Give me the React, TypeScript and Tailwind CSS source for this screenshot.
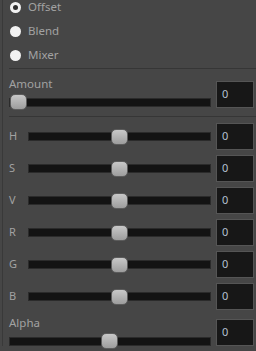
import React from 'react';

const font = { fontFamily: '"Noto Sans", "Liberation Sans", sans-serif' };

const Radio = ({ label, checked }: { label: string; checked?: boolean }) => (
  <div className="h-[24px] flex items-center">
    <div className="ml-[1px] w-[11px] h-[11px] rounded-full bg-[#f2f2f2] flex items-center justify-center">
      {checked && <div className="w-[5px] h-[5px] rounded-full bg-[#2e2e2e]" />}
    </div>
    <span className="ml-[7px] text-[11.5px] text-[#a2a2a2]">{label}</span>
  </div>
);

const Track = ({ start }: { start?: boolean }) => (
  <div className="relative flex-1 h-[16px] flex items-center">
    <div className="w-full h-[9px] bg-[#131313] border border-[#2b2b2b]" />
    <div
      className={
        'absolute top-0 w-[17px] h-[16px] rounded-[5px] border border-[#5c5c5c] bg-gradient-to-b from-[#c8c8c8] to-[#9d9d9d] ' +
        (start ? 'left-[1px]' : 'left-[calc(50%-9px)]')
      }
    />
  </div>
);

const ValueBox = ({ className = '' }: { className?: string }) => (
  <div className={'w-[38px] h-[27px] shrink-0 bg-[#171717] border border-[#555555] flex items-center pl-[5px] text-[11px] text-[#b4c2d2] ' + className}>
    0
  </div>
);

const Row = ({ label }: { label: string }) => (
  <div className="h-[27px] flex items-center">
    <span className="w-[19px] text-[11px] text-[#a2a2a2]">{label}</span>
    <Track />
    <ValueBox className="ml-[5px]" />
  </div>
);

const LabeledSlider = ({ label, start, boxTop }: { label: string; start?: boolean; boxTop: string }) => (
  <div className="flex items-start">
    <div className="flex-1 flex flex-col">
      <span className="h-[14px] leading-[14px] text-[11.5px] text-[#a2a2a2]">{label}</span>
      <div className="mt-[3px] flex">
        <Track start={start} />
      </div>
    </div>
    <ValueBox className={'ml-[5px] ' + boxTop} />
  </div>
);

const App: React.FC = () => {
  return (
    <div className="w-[256px] h-[351px] bg-[#464646] overflow-hidden pl-[2px]" style={font}>
      <div className="h-full border-l border-[#393939] pl-[6px] pr-[2px]">
        {/* Mode */}
        <div className="-mt-[5px] flex flex-col">
          <Radio label="Offset" checked />
          <Radio label="Blend" />
          <Radio label="Mixer" />
        </div>
        <div className="mt-[1px] -mr-[2px] border-t border-[#363636]" />

        {/* Amount */}
        <div className="h-[47px] pt-[8px]">
          <LabeledSlider label="Amount" start boxTop="mt-[4px]" />
        </div>
        <div className="-mr-[2px] border-t border-[#363636]" />

        {/* Channels */}
        <div className="pt-[6px] flex flex-col gap-[5px]">
          {['H', 'S', 'V', 'R', 'G', 'B'].map((c) => (
            <Row key={c} label={c} />
          ))}
        </div>

        {/* Alpha */}
        <div className="mt-[6px]">
          <LabeledSlider label="Alpha" boxTop="mt-[3px]" />
        </div>
      </div>
    </div>
  );
};

export default App;
